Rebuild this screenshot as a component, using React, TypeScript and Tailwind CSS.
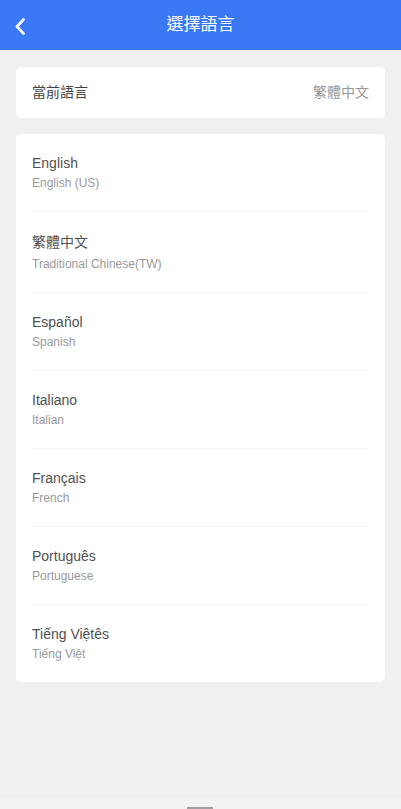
const languages = [
  { name: "English", sub: "English (US)" },
  { name: "繁體中文", sub: "Traditional Chinese(TW)", cjk: true },
  { name: "Español", sub: "Spanish" },
  { name: "Italiano", sub: "Italian" },
  { name: "Français", sub: "French" },
  { name: "Português", sub: "Portuguese" },
  { name: "Tiếng Việtês", sub: "Tiếng Việt" },
];

export default function App() {
  return (
    <div
      className="relative min-h-[809px] bg-[#f0f0f0]"
      style={{ fontFamily: '"Liberation Sans", Arial, "Noto Sans CJK TC", sans-serif' }}
    >
      {/* Header */}
      <div className="relative flex h-[50px] items-center justify-center bg-[#3b78f6]">
        <button className="absolute left-[12px] top-[15px] flex h-[22px] w-[16px] items-center justify-center">
          <svg width="12" height="17" viewBox="0 0 12 17" fill="none">
            <path d="M9.5 1.5L3 8.5L9.5 15.5" stroke="white" strokeWidth="2.6" strokeLinecap="round" strokeLinejoin="round" />
          </svg>
        </button>
        <h1 className="text-[17px] font-normal text-white">選擇語言</h1>
      </div>

      <div className="flex flex-col gap-4 px-4 pt-[17px]">
        {/* Current language */}
        <div className="flex h-[51px] items-center justify-between rounded-[5px] bg-white px-4">
          <span className="text-[14px] text-[#444]">當前語言</span>
          <span className="text-[14px] text-[#999]">繁體中文</span>
        </div>

        {/* Language list */}
        <div className="rounded-[5px] bg-white px-4">
          {languages.map((lang, i) => (
            <div
              key={lang.name}
              className={
                "flex flex-col pt-[21px] pb-[21px] " +
                (i < languages.length - 1 ? "border-b border-[#f3f3f3]" : "")
              }
            >
              <span
                className={
                  "text-[14px] text-[#505050] " + (lang.cjk ? "leading-[19px]" : "leading-[16px]")
                }
              >
                {lang.name}
              </span>
              <span className="mt-[5px] text-[12px] leading-[14px] text-[#999]">{lang.sub}</span>
            </div>
          ))}
        </div>
      </div>

      {/* Bottom indicator */}
      <div className="absolute bottom-0 left-0 right-0 h-[11px] bg-[#f2f2f4]">
        <div className="absolute bottom-0 left-[187px] h-[2px] w-[26px] bg-[#a39ca3]" />
      </div>
    </div>
  );
}
